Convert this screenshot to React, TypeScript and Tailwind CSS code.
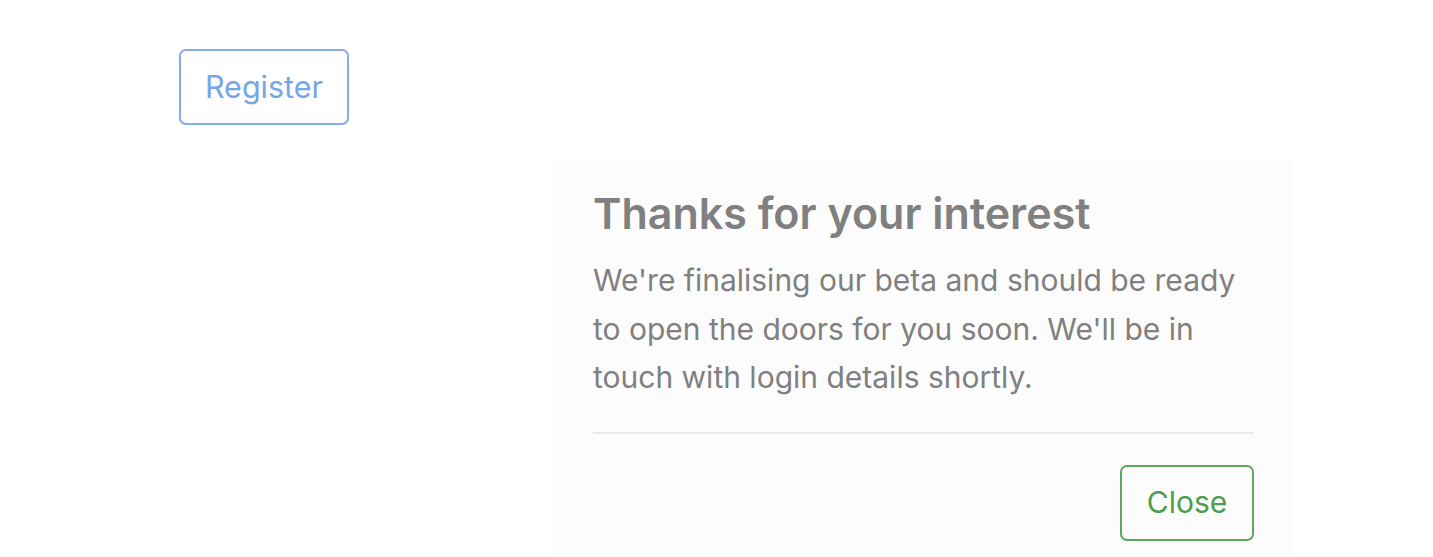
export default function App() {
  return (
    <div
      className="relative h-[557px] w-[1433px] overflow-hidden bg-white"
      style={{ fontFamily: 'Inter, "Liberation Sans", Arial, sans-serif' }}
    >
      <div className="pl-[179px] pt-[49px]">
        <button className="h-[76px] w-[170px] rounded-[7px] border-2 border-[#82abe8] text-[30.5px] text-[#76a5ea]">
          Register
        </button>
      </div>
      <div className="ml-[552px] mt-[35px] h-[400px] w-[741px] bg-[#fcfcfc] pl-[41px] pr-[39px] pt-[25px]">
        <h2 className="text-[43px] font-semibold leading-[56px] text-[#808080]">
          Thanks for your interest
        </h2>
        <p className="mt-[15px] text-[30px] leading-[48.5px] text-[#808080]">
          We're finalising our beta and should be ready to open the doors for you soon. We'll be in touch with login
          details shortly.
        </p>
        <div className="mt-[30px] h-[2px] w-full bg-[#ebebeb]" />
        <div className="mt-[31px] flex justify-end">
          <button className="h-[76px] w-[134px] rounded-[7px] border-2 border-[#5fa65f] text-[30px] text-[#4d9d4d]">
            Close
          </button>
        </div>
      </div>
    </div>
  );
}
